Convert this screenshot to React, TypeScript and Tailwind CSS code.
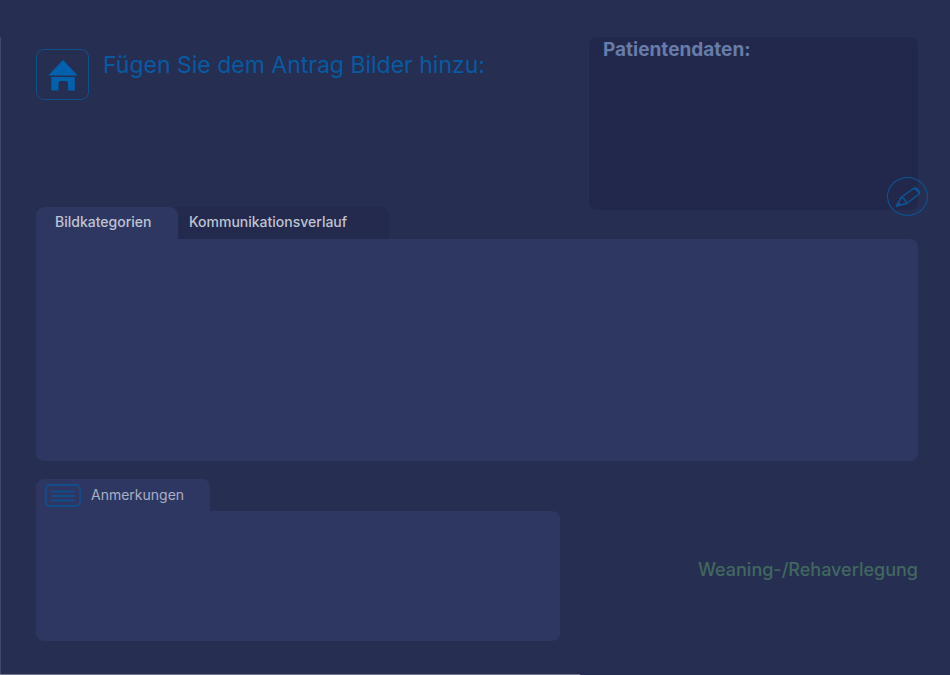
import { useState } from "react";

function HomeIcon() {
  return (
    <svg viewBox="0 0 30 32" className="h-8 w-[30px]" fill="#0061ad" aria-hidden="true">
      <path d="M15 1 29.800 16.500H.2z" />
      <path d="M3.300 18h23.500V31.500H20V24q0-2-2-2h-5.500q-2 0-2 2v7.500H3.300z" />
    </svg>
  );
}

function PencilIcon() {
  return (
    <svg
      viewBox="0 0 26 22"
      className="h-[22px] w-[26px]"
      fill="none"
      stroke="#0d5595"
      strokeWidth="1.500"
      strokeLinejoin="round"
      strokeLinecap="round"
      aria-hidden="true"
    >
      <path d="M1.500 20 6 11.500 18.500 2.500Q21 1 23 3.500T24 8L11.500 17.500z" />
      <path d="M6 11.500Q10.500 12.500 11.500 17.500M18.500 2.500Q23 3.500 24 8M1.500 20l1.700-3.200q1.500.5 1.700 2.200z" />
    </svg>
  );
}

function NotesIcon() {
  return (
    <svg viewBox="0 0 36 23" className="h-[23px] w-9" fill="none" stroke="#134d8c" strokeWidth="1.800" aria-hidden="true">
      <rect x="1" y="1" width="34" height="21" rx="4" />
      <path d="M6.500 7.500h22.500M6.500 12h22.500M6.500 16.500h22.500" strokeLinecap="round" />
    </svg>
  );
}

const tabs = ["Bildkategorien", "Kommunikationsverlauf"];

export default function App() {
  const [active, setActive] = useState(0);

  return (
    <div className="flex min-h-screen flex-col bg-[#262e52] pt-[37px] font-['Inter','Liberation_Sans',sans-serif]">
      <main className="flex-1 border-l border-[#424969] pr-8 pb-8 pl-[35px]">
        <div className="flex items-start justify-between">
          <div className="flex h-[202px] flex-col justify-between">
            <header className="flex items-start gap-[14px] pt-3">
              <button
                type="button"
                aria-label="Startseite"
                className="flex h-[51px] w-[53px] items-center justify-center rounded-lg border border-[#10508c]"
              >
                <HomeIcon />
              </button>
              <h1 className="text-[23px] leading-8 text-[#085ba2]">Fügen Sie dem Antrag Bilder hinzu:</h1>
            </header>
            <div role="tablist" className="flex h-8">
              <div className="bg-[#232a4d]">
                <button
                  type="button"
                  role="tab"
                  id="tab-0"
                  aria-controls="tab-panel"
                  aria-selected={active === 0}
                  onClick={() => setActive(0)}
                  className="h-8 w-[142px] rounded-t-lg bg-[#2e3761] pb-[3px] pl-[19px] text-left text-[14px] font-medium text-[#bfc3d2]"
                >
                  {tabs[0]}
                </button>
              </div>
              <button
                type="button"
                role="tab"
                id="tab-1"
                aria-controls="tab-panel"
                aria-selected={active === 1}
                onClick={() => setActive(1)}
                className="h-8 w-[211px] rounded-tr-lg bg-[#232a4d] pb-[3px] pl-[11px] text-left text-[14px] font-medium text-[#bfc3d2]"
              >
                {tabs[1]}
              </button>
            </div>
          </div>
          <section className="relative h-[173px] w-[37.3%] rounded-lg bg-[#22284b] px-[14px] pt-px">
            <h2 className="text-[19px] leading-6 font-bold text-[#677ca9]">Patientendaten:</h2>
            <button
              type="button"
              aria-label="Patientendaten bearbeiten"
              className="absolute -right-[10px] -bottom-[6px] flex h-[39px] w-[41px] items-center justify-center rounded-[50%] border border-[#0d5595]"
            >
              <PencilIcon />
            </button>
          </section>
        </div>
        <section
          role="tabpanel"
          id="tab-panel"
          aria-labelledby={active === 0 ? "tab-0" : "tab-1"}
          className="h-[222px] rounded-lg rounded-tl-none bg-[#2e3761]"
        />
        <div className="mt-[18px] flex items-center justify-between">
          <div className="w-[59.4%]">
            <label
              htmlFor="notes"
              className="flex h-8 w-[174px] items-center gap-[10px] rounded-t-lg bg-[#2e3761] pl-[9px] text-[14px] text-[#a9afc6]"
            >
              <NotesIcon />
              <span className="pb-0.5">Anmerkungen</span>
            </label>
            <textarea
              id="notes"
              className="block h-[130px] w-full resize-none rounded-lg rounded-tl-none bg-[#2e3761] px-4 py-3 text-[14px] text-[#a9afc6] outline-none"
            />
          </div>
          <p className="pt-5 text-[18px] leading-6 font-medium text-[#41685f]">Weaning-/Rehaverlegung</p>
        </div>
      </main>
      <div className="h-px w-[61%] bg-[#74788f]" />
    </div>
  );
}
